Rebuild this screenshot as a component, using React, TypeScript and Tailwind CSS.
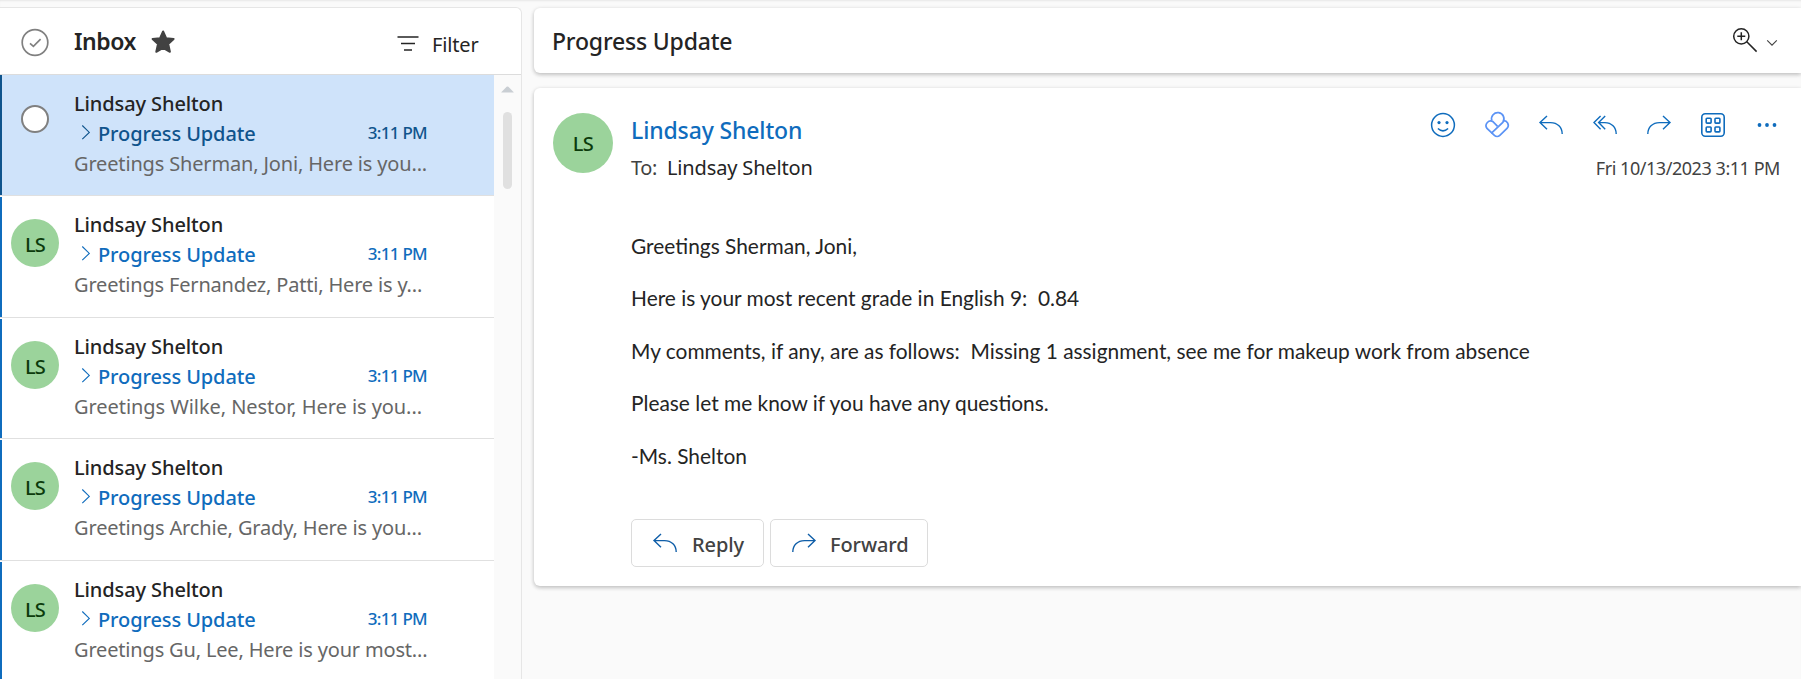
import type { ReactNode } from "react";

const messages = [
  { preview: "Greetings Sherman, Joni, Here is you...", spacing: "tracking-[-0.16px]", height: "h-[121px]", selected: true },
  { preview: "Greetings Fernandez, Patti, Here is y...", spacing: "tracking-[-0.18px]", height: "h-[122px]", selected: false },
  { preview: "Greetings Wilke, Nestor, Here is you...", spacing: "tracking-[-0.06px]", height: "h-[121px]", selected: false },
  { preview: "Greetings Archie, Grady, Here is you...", spacing: "tracking-[-0.14px]", height: "h-[122px]", selected: false },
  { preview: "Greetings Gu, Lee, Here is your most...", spacing: "tracking-[-0.17px]", height: "h-[122px]", selected: false },
];

const paragraphs = [
  "Greetings Sherman, Joni,",
  "Here is your most recent grade in English 9:\u00a0 0.84",
  "My comments, if any, are as follows:\u00a0 Missing 1 assignment, see me for makeup work from absence",
  "Please let me know if you have any questions.",
  "-Ms. Shelton",
];

const REPLY = "M8 3 L1 9.6 L8 16.2 M1 9.6 H11.5 C18.5 9.6 23.2 14.2 23.2 21";
const FORWARD = "M16 3 L23 9.6 L16 16.2 M23 9.6 H12.5 C5.5 9.6 0.8 14.2 0.8 21";

function Icon({ children, className = "", width = 24, height = 24, stroke = 1.4 }: { children: ReactNode; className?: string; width?: number; height?: number; stroke?: number }) {
  return (
    <svg width={width} height={height} viewBox={`0 0 ${width} ${height}`} fill="none" stroke="currentColor" strokeWidth={stroke} className={`block shrink-0 overflow-visible ${className}`}>
      {children}
    </svg>
  );
}

function Message({ preview, spacing, height, selected }: (typeof messages)[number]) {
  return (
    <div className={`flex flex-col border-b border-[#e0e0e0] ${height} shrink-0`}>
      <div className={`flex min-h-0 flex-1 ${selected ? "bg-[#cfe3fa]" : "bg-white"}`}>
        <div className={`w-[2px] shrink-0 ${selected ? "bg-[#0f548c]" : "mt-px bg-[#0f6cbd]"}`} />
        <div className="w-[72px] shrink-0 pl-[9px] pt-[23px]">
          {selected ? (
            <div className="ml-[10px] mt-[7px] size-[28px] rounded-full border-2 border-[#808080] bg-white" />
          ) : (
            <div className="flex size-[48px] items-center justify-center rounded-full bg-[#9bd39b] pt-[3px] text-[20px] font-medium tracking-[-0.8px] text-[#0c3b0c]">LS</div>
          )}
        </div>
        <div className="w-[359px] whitespace-nowrap pt-[14px] leading-[30px]">
          <div className="text-[20px] font-medium tracking-[-0.11px] text-[#242424]">Lindsay Shelton</div>
          <div className={`flex items-center ${selected ? "text-[#0f548c]" : "text-[#0f6cbd]"}`}>
            <Icon width={24} height={30} stroke={1.1}>
              <path d="M8.3 6.5 L15.3 13.4 L8.3 20.2" />
            </Icon>
            <span className="text-[20px] font-medium tracking-[-0.1px]">Progress Update</span>
            <span className="-mt-[3px] ml-auto mr-[6px] text-[17px] font-medium tracking-[-0.7px]">3:11 PM</span>
          </div>
          <div className={`text-[20px] text-[#666666] ${spacing}`}>{preview}</div>
        </div>
      </div>
    </div>
  );
}

export default function App() {
  return (
    <div className="flex h-[679px] w-full overflow-hidden bg-[#fafafa] font-['Noto_Sans',sans-serif] text-[#242424] shadow-[inset_0_2px_2px_-1px_rgba(0,0,0,0.08)]">
      <aside className="mt-[7px] flex w-[522px] shrink-0 flex-col rounded-tr-[6px] border-r border-t border-[#e6e6e6] bg-white">
        <header className="flex h-[67px] shrink-0 border-b border-[#dcdcdc]">
          <Icon width={27} height={27} className="ml-[21.5px] mt-[21px] text-[#808080]" stroke={1.7}>
            <circle cx="13" cy="13.5" r="12.8" />
            <path d="M8 14.3 L11.4 17.4 L18.6 10.2" />
          </Icon>
          <h2 className="ml-[25.5px] mt-[17px] w-[77px] text-[23px] font-semibold leading-[32px] tracking-[-0.45px]">Inbox</h2>
          <svg width="24" height="24" viewBox="0 0 24 24" className="mt-[22px] block fill-[#424242] stroke-[#424242] stroke-2 [stroke-linejoin:round]">
            <path d="M12.1 1.5 L15.1 8.2 L22.6 9 L17.2 14 L18.9 21.8 L12.1 18 L5.3 21.8 L7 14 L1.6 9 L9.1 8.2 Z" />
          </svg>
          <Icon width={22} height={16} className="ml-[222px] mt-[28px] text-[#242424]" stroke={1.6}>
            <path d="M0.5 1 H21.5 M4 7.5 H18 M7 14 H15" />
          </Icon>
          <span className="ml-[13px] mt-[22px] text-[20px] leading-[30px] tracking-[-0.15px]">Filter</span>
        </header>
        <div className="flex min-h-0 flex-1">
          <div className="flex w-[494px] shrink-0 flex-col overflow-hidden">
            {messages.map((m) => (
              <Message key={m.preview} {...m} />
            ))}
          </div>
          <div className="flex flex-1 flex-col items-center bg-[#fafafa] pt-[11px]">
            <svg width="13" height="7" viewBox="0 0 13 7" className="block fill-[#c9ced3]">
              <path d="M0.3 6.6 Q0.3 6 1 5.4 L5.6 0.8 Q6.5 0 7.4 0.8 L12 5.4 Q12.7 6 12.7 6.6 Z" />
            </svg>
            <div className="mt-[19px] h-[77px] w-[9px] rounded-full bg-[#e0e0e0]" />
          </div>
        </div>
      </aside>

      <main className="ml-[12px] flex min-w-0 flex-1 flex-col pt-[8px]">
        <section className="flex h-[65px] shrink-0 rounded-l-[6px] bg-white pl-[18px] shadow-[0_1px_4px_rgba(0,0,0,0.15),0_2px_4px_rgba(0,0,0,0.13)]">
          <h1 className="mt-[17px] text-[23px] font-medium leading-[32px] tracking-[-0.18px]">Progress Update</h1>
          <div className="ml-auto flex">
            <Icon className="mr-[10px] mt-[20px] text-[#242424]" stroke={1.5}>
              <circle cx="8.3" cy="8.3" r="7.6" />
              <path d="M8.3 4.3 V12.3 M4.3 8.3 H12.3 M13.8 13.8 L23.6 23.6" />
            </Icon>
            <Icon width={10} height={6} className="mr-[24px] mt-[32px] text-[#424242]" stroke={1.1}>
              <path d="M0.2 0.4 L5 5.2 L9.8 0.4" />
            </Icon>
          </div>
        </section>

        <section className="mt-[15px] flex h-[498px] shrink-0 rounded-l-[6px] bg-white pl-[19px] shadow-[0_1px_4px_rgba(0,0,0,0.15),0_2px_4px_rgba(0,0,0,0.13)]">
          <div className="mt-[25px] flex size-[60px] shrink-0 items-center justify-center rounded-full bg-[#9bd39b] pt-[2px] text-[20px] font-medium tracking-[-0.6px] text-[#0c3b0c]">LS</div>
          <div className="ml-[18px] flex min-w-0 flex-1 flex-col">
            <div className="flex h-[111px] shrink-0 justify-between">
              <div className="whitespace-nowrap">
                <div className="mt-[26px] text-[23px] font-medium leading-[32px] tracking-[-0.14px] text-[#0f6cbd]">Lindsay Shelton</div>
                <div className="mt-[7px] flex text-[20px] leading-[30px]">
                  <span className="w-[36px] tracking-[-0.4px] text-[#424242]">To:</span>
                  <span className="tracking-[-0.15px]">Lindsay Shelton</span>
                </div>
              </div>
              <div className="flex flex-col items-end pr-[21px] pt-[25px]">
                <div className="flex gap-[30px] pr-[1px] text-[#0f6cbd]">
                  <Icon stroke={1.5}>
                    <circle cx="12" cy="12" r="11.4" />
                    <path d="M6.9 15.5 Q12 20.3 17.1 15.5" />
                    <circle cx="8" cy="9.6" r="1.6" fill="currentColor" stroke="none" />
                    <circle cx="16" cy="9.6" r="1.6" fill="currentColor" stroke="none" />
                  </Icon>
                  <Icon className="text-[#5b93f5]" stroke={1.7}>
                    <path d="M6.8 7.6 A6.2 6.2 0 1 1 17.8 9.4 L6.2 20.4" />
                    <path d="M18 7.7 A4.6 4.6 0 0 1 22 15.4 L14.8 22.4 A3.9 3.9 0 0 1 9.4 22.4 L2 15.4 A4.6 4.6 0 0 1 8.2 8.8 L12.6 13.4" />
                  </Icon>
                  <Icon><path d={REPLY} /></Icon>
                  <Icon>
                    <path d="M7.6 3 L1 9.6 L7.6 16.2 M12.2 3 L5.6 9.6 L12.2 16.2 M5.6 9.6 H11.8 C18.5 9.6 23.2 14.2 23.2 21" />
                  </Icon>
                  <Icon><path d={FORWARD} /></Icon>
                  <Icon stroke={1.6}>
                    <rect x="0.8" y="0.8" width="22.4" height="22.4" rx="3.4" />
                    <rect x="5.2" y="5.2" width="4.9" height="4.9" rx="0.8" />
                    <rect x="14" y="5.2" width="4.9" height="4.9" rx="0.8" />
                    <rect x="5.2" y="14" width="4.9" height="4.9" rx="0.8" />
                    <rect x="14" y="14" width="4.9" height="4.9" rx="0.8" />
                  </Icon>
                  <svg width="24" height="24" viewBox="0 0 24 24" className="block fill-current">
                    <circle cx="4.5" cy="12" r="1.9" />
                    <circle cx="12" cy="12" r="1.9" />
                    <circle cx="19.5" cy="12" r="1.9" />
                  </svg>
                </div>
                <div className="mt-[17px] whitespace-nowrap text-[18px] leading-[28px] tracking-[-0.45px] text-[#424242]">Fri 10/13/2023 3:11 PM</div>
              </div>
            </div>

            <div className="flex h-[320px] shrink-0 flex-col gap-[22.4px] whitespace-nowrap pt-[32px] font-['Lato',sans-serif] text-[20.9px] leading-[30px] text-[#242424]">
              {paragraphs.map((p) => (
                <p key={p}>{p}</p>
              ))}
            </div>

            <div className="flex gap-[6px] text-[20px] font-medium text-[#424242]">
              <button className="flex h-[48px] w-[133px] rounded-[5px] border border-[#dcdcdc] bg-white pl-[21px]">
                <Icon className="mt-[11px] text-[#0f5ea8]"><path d={REPLY} /></Icon>
                <span className="ml-[15px] mt-[10px] leading-[30px] tracking-[-0.1px]">Reply</span>
              </button>
              <button className="flex h-[48px] w-[158px] rounded-[5px] border border-[#dcdcdc] bg-white pl-[21px]">
                <Icon className="mt-[11px] text-[#0f5ea8]"><path d={FORWARD} /></Icon>
                <span className="ml-[14px] mt-[10px] leading-[30px] tracking-[-0.1px]">Forward</span>
              </button>
            </div>
          </div>
        </section>
      </main>
    </div>
  );
}
